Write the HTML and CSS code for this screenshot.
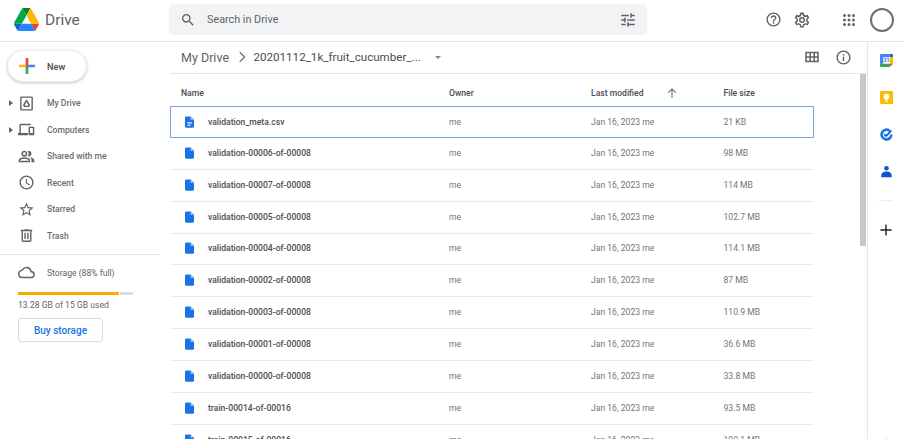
FILE: index.html
```html
<!DOCTYPE html>
<html lang="en">
<head>
    <meta charset="UTF-8">
    <title>My Drive - Google Drive</title>
    <link rel="stylesheet" href="styles.css">
</head>
<body>

<header class="topbar">
    <div class="brand">
        <svg class="logo" viewBox="0 0 87.3 78" width="25" height="23" preserveAspectRatio="none">
            <path d="M6.6 66.85l3.85 6.65c.8 1.4 1.95 2.5 3.3 3.3L27.5 53H0c0 1.55.4 3.1 1.2 4.5z" fill="#0066da"/>
            <path d="M43.65 25L29.9 1.2c-1.35.8-2.5 1.9-3.3 3.3L1.2 48.5A9 9 0 0 0 0 53h27.5z" fill="#00ac47"/>
            <path d="M73.55 76.8c1.35-.8 2.5-1.9 3.3-3.3l1.6-2.75L86.1 57.5c.8-1.4 1.2-2.95 1.2-4.5H59.8l5.85 11.5z" fill="#ea4335"/>
            <path d="M43.65 25L57.4 1.2C56.05.4 54.5 0 52.9 0H34.4c-1.6 0-3.15.45-4.5 1.2z" fill="#00832d"/>
            <path d="M59.8 53H27.5L13.75 76.8c1.35.8 2.9 1.2 4.5 1.2h50.8c1.6 0 3.15-.45 4.5-1.2z" fill="#2684fc"/>
            <path d="M73.4 26.5L60.7 4.5c-.8-1.4-1.95-2.5-3.3-3.3L43.65 25 59.8 53h27.45c0-1.55-.4-3.1-1.2-4.5z" fill="#ffba00"/>
        </svg>
        <span class="brand-name">Drive</span>
    </div>
    <div class="search">
        <svg class="icon" viewBox="0 0 24 24" width="16" height="16"><path d="M15.5 14h-.79l-.28-.27A6.47 6.47 0 0 0 16 9.5 6.5 6.5 0 1 0 9.5 16c1.61 0 3.09-.59 4.23-1.57l.27.28v.79l5 4.99L20.49 19zm-6 0C7.01 14 5 11.99 5 9.5S7.01 5 9.5 5 14 7.01 14 9.5 11.99 14 9.5 14z"/></svg>
        <span class="search-text">Search in Drive</span>
        <svg class="icon tune" viewBox="0 0 24 24" width="18" height="18"><path d="M3 17v2h6v-2zM3 5v2h10V5zm10 16v-2h8v-2h-8v-2h-2v6zM7 9v2H3v2h4v2h2V9zm14 4v-2H11v2zm-6-4h2V7h4V5h-4V3h-2z"/></svg>
    </div>
    <div class="top-actions">
        <svg class="icon" viewBox="0 0 24 24" width="17" height="17"><path d="M11 18h2v-2h-2zm1-16a10 10 0 1 0 0 20 10 10 0 0 0 0-20zm0 18a8 8 0 1 1 0-16 8 8 0 0 1 0 16zm0-14a4 4 0 0 0-4 4h2a2 2 0 1 1 4 0c0 2-3 1.75-3 5h2c0-2.25 3-2.5 3-5a4 4 0 0 0-4-4z"/></svg>
        <svg class="icon gear" viewBox="0 0 24 24" width="18" height="18"><path fill-rule="evenodd" d="M19.4 13c.04-.33.1-.66.1-1s-.06-.67-.1-1l2.100-1.650c.2-.15.25-.42.13-.64l-2-3.460c-.12-.22-.4-.3-.6-.22l-2.500 1c-.52-.4-1.080-.73-1.700-.98l-.37-2.650A.5.5 0 0 0 14 2h-4a.5.5 0 0 0-.5.42l-.37 2.650c-.62.25-1.180.59-1.700.98l-2.500-1a.5.5 0 0 0-.6.22l-2 3.460c-.13.22-.07.49.12.64L4.600 11c-.04.33-.1.66-.1 1s.06.67.1 1l-2.150 1.650a.5.5 0 0 0-.12.64l2 3.460c.12.22.4.3.6.22l2.500-1c.52.4 1.080.73 1.700.98l.37 2.650c.04.24.25.42.5.42h4c.25 0 .46-.18.5-.42l.37-2.650c.62-.25 1.180-.59 1.700-.98l2.500 1c.22.08.48 0 .6-.22l2-3.460a.5.5 0 0 0-.12-.64zM12 20l-1-.1-.3-2.300-.7-.3a6 6 0 0 1-1.400-.8l-.6-.4-2.200.9-1-1.700 1.900-1.400-.1-.8a7 7 0 0 1 0-1.600l.1-.8-1.900-1.400 1-1.700 2.200.9.6-.5a6 6 0 0 1 1.400-.8l.7-.3.3-2.300h2l.3 2.300.7.3a6 6 0 0 1 1.400.8l.6.4 2.200-.9 1 1.700-1.900 1.400.1.800a7 7 0 0 1 0 1.600l-.1.8 1.900 1.400-1 1.700-2.200-.9-.6.5a6 6 0 0 1-1.400.8l-.7.3-.3 2.300zm0-4a4 4 0 1 1 0-8 4 4 0 0 1 0 8zm0-2a2 2 0 1 0 0-4 2 2 0 0 0 0 4z"/></svg>
        <svg class="icon apps" viewBox="0 0 24 24" width="18" height="18"><path d="M6 8a2 2 0 1 0 0-4 2 2 0 0 0 0 4zm6 12a2 2 0 1 0 0-4 2 2 0 0 0 0 4zm-6 0a2 2 0 1 0 0-4 2 2 0 0 0 0 4zm0-6a2 2 0 1 0 0-4 2 2 0 0 0 0 4zm6 0a2 2 0 1 0 0-4 2 2 0 0 0 0 4zm4-8a2 2 0 1 0 4 0 2 2 0 0 0-4 0zm-4 2a2 2 0 1 0 0-4 2 2 0 0 0 0 4zm6 6a2 2 0 1 0 0-4 2 2 0 0 0 0 4zm0 6a2 2 0 1 0 0-4 2 2 0 0 0 0 4z"/></svg>
        <div class="avatar"></div>
    </div>
</header>

<div class="app">
    <aside class="sidebar">
        <button class="new-btn">
            <svg viewBox="0 0 36 36" width="24" height="24">
                <path fill="#34a853" d="M16 16v14h4V20z"/>
                <path fill="#4285f4" d="M30 16H20l-4 4h14z"/>
                <path fill="#fbbc05" d="M6 16v4h10l4-4z"/>
                <path fill="#ea4335" d="M20 16V6h-4v14z"/>
            </svg>
            New
        </button>

        <nav class="nav">
            <a class="nav-item">
                <span class="caret"></span>
                <svg class="icon" viewBox="0 0 24 24" width="17" height="17"><path fill-rule="evenodd" d="M19 2H5a2 2 0 0 0-2 2v16c0 1.100.9 2 2 2h14a2 2 0 0 0 2-2V4a2 2 0 0 0-2-2zM5 4h14v16H5zm6 3h2l4 7-1.500 3h-7L7 14zm1 2.500L9.500 14l.6 1h3.800l.6-1z"/></svg>
                My Drive
            </a>
            <a class="nav-item">
                <span class="caret"></span>
                <svg class="icon" viewBox="0 0 24 24" width="17" height="17"><path d="M4 6h14V4H4a2 2 0 0 0-2 2v11H0v3h14v-3H4zm18 2h-6a1 1 0 0 0-1 1v10c0 .55.45 1 1 1h6c.55 0 1-.45 1-1V9c0-.55-.45-1-1-1zm-1 9h-4v-7h4z"/></svg>
                Computers
            </a>
            <a class="nav-item">
                <span class="caret-gap"></span>
                <svg class="icon" viewBox="0 0 24 24" width="17" height="17"><path d="M15 8c0-1.420-.5-2.730-1.330-3.760A3.990 3.990 0 0 1 19 8a3.990 3.990 0 0 1-5.330 3.760A5.970 5.970 0 0 0 15 8zm1.660 5.130C18.030 14.060 19 15.320 19 17v3h4v-3c0-2.180-3.570-3.470-6.340-3.870zM9 6a2 2 0 1 0 0 4 2 2 0 0 0 0-4zm0 6a4 4 0 1 1 0-8 4 4 0 0 1 0 8zm0 1c-2.670 0-8 1.340-8 4v3h16v-3c0-2.660-5.330-4-8-4zm6 5H3v-.99C3.200 16.290 6.300 15 9 15s5.800 1.290 6 2v1z"/></svg>
                Shared with me
            </a>
            <a class="nav-item">
                <span class="caret-gap"></span>
                <svg class="icon" viewBox="0 0 24 24" width="17" height="17"><path d="M12 2a10 10 0 1 0 0 20 10 10 0 0 0 0-20zm0 18a8 8 0 1 1 0-16 8 8 0 0 1 0 16zm.5-13H11v6l5.200 3.200.8-1.300-4.500-2.700z"/></svg>
                Recent
            </a>
            <a class="nav-item">
                <span class="caret-gap"></span>
                <svg class="icon" viewBox="0 0 24 24" width="17" height="17"><path d="M22 9.240l-7.200-.62L12 2 9.200 8.630 2 9.240l5.460 4.730L5.820 21 12 17.270 18.180 21l-1.630-7.030zM12 15.400l-3.760 2.270 1-4.280-3.320-2.880 4.380-.38L12 6.100l1.700 4.040 4.380.38-3.320 2.880 1 4.280z"/></svg>
                Starred
            </a>
            <a class="nav-item">
                <span class="caret-gap"></span>
                <svg class="icon" viewBox="0 0 24 24" width="17" height="17"><path d="M15 4V3H9v1H4v2h1v13a2 2 0 0 0 2 2h10a2 2 0 0 0 2-2V6h1V4zm2 15H7V6h10zM9 8h2v9H9zm4 0h2v9h-2z"/></svg>
                Trash
            </a>
        </nav>

        <div class="storage">
            <div class="storage-head">
                <svg class="icon" viewBox="0 0 24 24" width="17" height="17"><path d="M19.350 10.040A7.490 7.490 0 0 0 12 4a7.500 7.500 0 0 0-6.650 4.040A6 6 0 0 0 6 20h13a5 5 0 0 0 .35-9.960zM19 18H6a4 4 0 0 1-.44-7.970l1.070-.11.5-.95A5.460 5.460 0 0 1 12 6c2.620 0 4.880 1.860 5.390 4.430l.3 1.500 1.530.11A3 3 0 0 1 19 18z"/></svg>
                Storage (88% full)
            </div>
            <div class="storage-bar"><div class="storage-fill"></div></div>
            <div class="storage-used">13.28 GB of 15 GB used</div>
            <button class="buy-btn">Buy storage</button>
        </div>
    </aside>

    <main class="content">
        <div class="crumbs">
            <span class="crumb">My Drive</span>
            <svg class="crumb-sep" viewBox="0 0 24 24" width="18" height="18"><path d="M9 5.500l6.500 6.500L9 18.500" fill="none" stroke="#5f6368" stroke-width="1.600"/></svg>
            <span class="crumb current">20201112_1k_fruit_cucumber_...</span>
            <span class="crumb-caret"></span>
            <div class="view-actions">
                <svg class="icon" viewBox="0 0 24 24" width="18" height="18"><path d="M3 5v14h18V5zm5.500 12H5v-4h3.500zm0-6H5V7h3.500zm5.500 6h-3.500v-4H14zm0-6h-3.500V7H14zm5 6h-3v-4h3zm0-6h-3V7h3z"/></svg>
                <svg class="icon" viewBox="0 0 24 24" width="17" height="17"><path d="M11 7h2v2h-2zm0 4h2v6h-2zm1-9a10 10 0 1 0 0 20 10 10 0 0 0 0-20zm0 18a8 8 0 1 1 0-16 8 8 0 0 1 0 16z"/></svg>
            </div>
        </div>

        <div class="list-wrap">
            <div class="list">
                <div class="row head">
                    <span class="col-name">Name</span>
                    <span class="col-owner">Owner</span>
                    <span class="col-mod">Last modified<svg class="sort" viewBox="0 0 24 24" width="14" height="14"><path d="M12 20V5M5.500 11.500L12 5l6.500 6.500" fill="none" stroke="#5f6368" stroke-width="1.800"/></svg></span>
                    <span class="col-size">File size</span>
                </div>
                <div class="row selected">
                    <span class="col-name"><svg class="file" viewBox="0 0 16 20"><path d="M2 0h8l6 6v12a2 2 0 0 1-2 2H2a2 2 0 0 1-2-2V2a2 2 0 0 1 2-2z" fill="#1a73e8"/><path d="M10 0l6 6h-6z" fill="#a8c7fa"/><path d="M4 10h8v1.300H4zm0 2.800h8v1.300H4zm0 2.800h5.500v1.300H4z" fill="#fff"/></svg>validation_meta.csv</span>
                    <span class="col-owner">me</span>
                    <span class="col-mod">Jan 16, 2023 me</span>
                    <span class="col-size">21 KB</span>
                </div>
                <div class="row">
                    <span class="col-name"><svg class="file" viewBox="0 0 16 20"><path d="M2 0h8l6 6v12a2 2 0 0 1-2 2H2a2 2 0 0 1-2-2V2a2 2 0 0 1 2-2z" fill="#1a73e8"/><path d="M10 0l6 6h-6z" fill="#a8c7fa"/></svg>validation-00006-of-00008</span>
                    <span class="col-owner">me</span>
                    <span class="col-mod">Jan 16, 2023 me</span>
                    <span class="col-size">98 MB</span>
                </div>
                <div class="row">
                    <span class="col-name"><svg class="file" viewBox="0 0 16 20"><path d="M2 0h8l6 6v12a2 2 0 0 1-2 2H2a2 2 0 0 1-2-2V2a2 2 0 0 1 2-2z" fill="#1a73e8"/><path d="M10 0l6 6h-6z" fill="#a8c7fa"/></svg>validation-00007-of-00008</span>
                    <span class="col-owner">me</span>
                    <span class="col-mod">Jan 16, 2023 me</span>
                    <span class="col-size">114 MB</span>
                </div>
                <div class="row">
                    <span class="col-name"><svg class="file" viewBox="0 0 16 20"><path d="M2 0h8l6 6v12a2 2 0 0 1-2 2H2a2 2 0 0 1-2-2V2a2 2 0 0 1 2-2z" fill="#1a73e8"/><path d="M10 0l6 6h-6z" fill="#a8c7fa"/></svg>validation-00005-of-00008</span>
                    <span class="col-owner">me</span>
                    <span class="col-mod">Jan 16, 2023 me</span>
                    <span class="col-size">102.7 MB</span>
                </div>
                <div class="row">
                    <span class="col-name"><svg class="file" viewBox="0 0 16 20"><path d="M2 0h8l6 6v12a2 2 0 0 1-2 2H2a2 2 0 0 1-2-2V2a2 2 0 0 1 2-2z" fill="#1a73e8"/><path d="M10 0l6 6h-6z" fill="#a8c7fa"/></svg>validation-00004-of-00008</span>
                    <span class="col-owner">me</span>
                    <span class="col-mod">Jan 16, 2023 me</span>
                    <span class="col-size">114.1 MB</span>
                </div>
                <div class="row">
                    <span class="col-name"><svg class="file" viewBox="0 0 16 20"><path d="M2 0h8l6 6v12a2 2 0 0 1-2 2H2a2 2 0 0 1-2-2V2a2 2 0 0 1 2-2z" fill="#1a73e8"/><path d="M10 0l6 6h-6z" fill="#a8c7fa"/></svg>validation-00002-of-00008</span>
                    <span class="col-owner">me</span>
                    <span class="col-mod">Jan 16, 2023 me</span>
                    <span class="col-size">87 MB</span>
                </div>
                <div class="row">
                    <span class="col-name"><svg class="file" viewBox="0 0 16 20"><path d="M2 0h8l6 6v12a2 2 0 0 1-2 2H2a2 2 0 0 1-2-2V2a2 2 0 0 1 2-2z" fill="#1a73e8"/><path d="M10 0l6 6h-6z" fill="#a8c7fa"/></svg>validation-00003-of-00008</span>
                    <span class="col-owner">me</span>
                    <span class="col-mod">Jan 16, 2023 me</span>
                    <span class="col-size">110.9 MB</span>
                </div>
                <div class="row">
                    <span class="col-name"><svg class="file" viewBox="0 0 16 20"><path d="M2 0h8l6 6v12a2 2 0 0 1-2 2H2a2 2 0 0 1-2-2V2a2 2 0 0 1 2-2z" fill="#1a73e8"/><path d="M10 0l6 6h-6z" fill="#a8c7fa"/></svg>validation-00001-of-00008</span>
                    <span class="col-owner">me</span>
                    <span class="col-mod">Jan 16, 2023 me</span>
                    <span class="col-size">36.6 MB</span>
                </div>
                <div class="row">
                    <span class="col-name"><svg class="file" viewBox="0 0 16 20"><path d="M2 0h8l6 6v12a2 2 0 0 1-2 2H2a2 2 0 0 1-2-2V2a2 2 0 0 1 2-2z" fill="#1a73e8"/><path d="M10 0l6 6h-6z" fill="#a8c7fa"/></svg>validation-00000-of-00008</span>
                    <span class="col-owner">me</span>
                    <span class="col-mod">Jan 16, 2023 me</span>
                    <span class="col-size">33.8 MB</span>
                </div>
                <div class="row">
                    <span class="col-name"><svg class="file" viewBox="0 0 16 20"><path d="M2 0h8l6 6v12a2 2 0 0 1-2 2H2a2 2 0 0 1-2-2V2a2 2 0 0 1 2-2z" fill="#1a73e8"/><path d="M10 0l6 6h-6z" fill="#a8c7fa"/></svg>train-00014-of-00016</span>
                    <span class="col-owner">me</span>
                    <span class="col-mod">Jan 16, 2023 me</span>
                    <span class="col-size">93.5 MB</span>
                </div>
                <div class="row">
                    <span class="col-name"><svg class="file" viewBox="0 0 16 20"><path d="M2 0h8l6 6v12a2 2 0 0 1-2 2H2a2 2 0 0 1-2-2V2a2 2 0 0 1 2-2z" fill="#1a73e8"/><path d="M10 0l6 6h-6z" fill="#a8c7fa"/></svg>train-00015-of-00016</span>
                    <span class="col-owner">me</span>
                    <span class="col-mod">Jan 16, 2023 me</span>
                    <span class="col-size">100.1 MB</span>
                </div>
            </div>
            <div class="scrollbar"><div class="thumb"></div></div>
        </div>
    </main>

    <aside class="addons">
        <svg viewBox="0 0 20 20" width="13" height="13">
            <rect width="20" height="20" rx="2" fill="#fff"/>
            <path d="M0 2a2 2 0 0 1 2-2h13v5H5v10H0z" fill="#4285f4"/>
            <path d="M15 0h3a2 2 0 0 1 2 2v3h-5z" fill="#1967d2"/>
            <path d="M15 5h5v10h-5z" fill="#fbbc04"/>
            <path d="M0 15h15v5H2a2 2 0 0 1-2-2z" fill="#34a853"/>
            <path d="M15 15h5l-5 5z" fill="#ea4335"/>
            <text x="10" y="13" class="cal-num">31</text>
        </svg>
        <svg viewBox="0 0 20 20" width="13" height="13">
            <rect width="20" height="20" rx="2" fill="#fbbc04"/>
            <path d="M10 4a4.500 4.500 0 0 0-2.500 8.200V14h5v-1.800A4.500 4.500 0 0 0 10 4zM8 15h4v1.500H8z" fill="#fff"/>
        </svg>
        <svg viewBox="0 0 20 20" width="13" height="13">
            <path d="M15 4.500A7.500 7.500 0 1 0 17.500 10" fill="none" stroke="#1a73e8" stroke-width="4"/>
            <path d="M6.500 9.500l3 3 8-8.500" fill="none" stroke="#0b57d0" stroke-width="2.500"/>
        </svg>
        <svg viewBox="0 0 20 20" width="13" height="13">
            <circle cx="10" cy="5" r="3.500" fill="#0b57d0"/>
            <path d="M2 19v-3c0-4 4-6 8-6s8 2 8 6v3z" fill="#0b57d0"/>
        </svg>
        <div class="addon-line"></div>
        <svg class="addon-plus" viewBox="0 0 20 20" width="14" height="14"><path d="M10 2v16M2 10h16" stroke="#202124" stroke-width="2"/></svg>
        <svg class="addon-chevron" viewBox="0 0 20 20" width="12" height="12"><path d="M5 12l5-5 5 5" fill="none" stroke="#5f6368" stroke-width="2"/></svg>
    </aside>
</div>

</body>
</html>
```

FILE: styles.css
```css
html, body {
    height: 100%;
    margin: 0;
    overflow: hidden;
}
body {
    font-family: Roboto, "Liberation Sans", sans-serif;
    font-size: 8.6px;
    color: #3c4043;
    background: #fff;
}
.icon {
    fill: #5f6368;
    flex: none;
}

/* top bar */
.topbar {
    height: 42px;
    display: flex;
    align-items: center;
    padding-bottom: 2px;
    border-bottom: 1px solid #e4e5e7;
    box-sizing: border-box;
}
.brand {
    width: 169px;
    display: flex;
    align-items: center;
    padding-left: 14px;
    box-sizing: border-box;
    flex: none;
}
.logo {
    margin-right: 6px;
}
.brand-name {
    font-size: 15.5px;
    color: #5f6368;
}
.search {
    width: 478px;
    height: 31px;
    background: #f1f3f4;
    border-radius: 5px;
    display: flex;
    align-items: center;
    padding: 0 10px 0 11px;
    box-sizing: border-box;
    flex: none;
}
.search-text {
    font-size: 10.800px;
    color: #5f6368;
    margin-left: 11px;
    flex: 1;
}
.top-actions {
    display: flex;
    align-items: center;
    margin-left: 118px;
}
.gear {
    margin-left: 11px;
}
.apps {
    margin-left: 29px;
}
.avatar {
    width: 20px;
    height: 20px;
    border: 2px solid #6f6f6f;
    border-radius: 50%;
    margin-left: 12px;
}

/* layout */
.app {
    display: flex;
    height: 397px;
}
.sidebar {
    width: 170px;
    flex: none;
    box-sizing: border-box;
}
.content {
    flex: 1;
    min-width: 0;
    display: flex;
    flex-direction: column;
}
.addons {
    width: 37px;
    flex: none;
    border-left: 1px solid #e4e5e7;
    display: flex;
    flex-direction: column;
    align-items: center;
    gap: 24px;
    padding-top: 12px;
    box-sizing: border-box;
    overflow: hidden;
}
.cal-num {
    font-size: 8px;
    font-weight: 700;
    text-anchor: middle;
    fill: #1a73e8;
}
.addon-line {
    width: 14px;
    height: 1px;
    background: #eceef0;
    margin-top: -2px;
}
.addon-plus {
    margin-top: -2px;
}
.addon-chevron {
    margin-top: auto;
    margin-bottom: -8px;
    flex: none;
}

/* sidebar */
.new-btn {
    display: flex;
    align-items: center;
    width: 80px;
    height: 32px;
    margin: 8px 0 0 7px;
    padding: 0 0 0 7px;
    background: #fff;
    border: 1px solid #eceef0;
    border-radius: 16px;
    box-shadow: 0 1px 3px rgba(60, 64, 67, .3);
    font-family: inherit;
    font-size: 9.200px;
    font-weight: 500;
    color: #4a4d51;
    gap: 8px;
}
.nav {
    margin-top: 8px;
}
.nav-item {
    height: 26.500px;
    display: flex;
    align-items: center;
    padding-left: 9px;
    color: #696d72;
    font-weight: 500;
}
.nav-item .icon {
    margin: 0 12.500px 0 4.500px;
}
.caret {
    width: 0;
    height: 0;
    border-left: 4px solid #5f6368;
    border-top: 3px solid transparent;
    border-bottom: 3px solid transparent;
}
.caret-gap {
    width: 4px;
}
.storage {
    border-top: 1px solid #e4e5e7;
    width: 159px;
    margin-top: 5px;
    padding: 9px 0 0 18px;
    box-sizing: border-box;
}
.storage-head {
    display: flex;
    align-items: center;
    gap: 12px;
    color: #5f6368;
}
.storage-bar {
    width: 115px;
    height: 3px;
    margin-top: 11px;
    background: #dadce0;
}
.storage-fill {
    width: 88%;
    height: 100%;
    background: #f9ab00;
    border-right: 1px solid #fff;
}
.storage-used {
    margin-top: 5px;
    color: #5f6368;
}
.buy-btn {
    display: block;
    width: 85px;
    height: 24px;
    margin-top: 8px;
    background: #fff;
    border: 1px solid #dadce0;
    border-radius: 3px;
    font-family: inherit;
    font-size: 10px;
    font-weight: 500;
    color: #1a73e8;
}

/* breadcrumbs */
.crumbs {
    height: 32px;
    display: flex;
    align-items: center;
    padding-bottom: 1px;
    border-bottom: 1px solid #e4e5e7;
    box-sizing: border-box;
    flex: none;
}
.crumb {
    font-size: 12.500px;
    color: #5f6368;
    padding-left: 11px;
}
.crumb.current {
    font-size: 11.600px;
    color: #4a4d51;
    padding-left: 3px;
}
.crumb-sep {
    margin-left: 3.500px;
}
.crumb-caret {
    width: 0;
    height: 0;
    margin-left: 14px;
    border-top: 3px solid #80868b;
    border-left: 3.500px solid transparent;
    border-right: 3.500px solid transparent;
}
.view-actions {
    margin-left: auto;
    margin-right: 15px;
    display: flex;
    align-items: center;
    gap: 14px;
}

/* file list */
.list-wrap {
    flex: 1;
    min-height: 0;
    display: flex;
    overflow: hidden;
}
.list {
    width: 644px;
    flex: none;
}
.row {
    display: flex;
    align-items: center;
    height: 31.850px;
    padding-bottom: 1px;
    box-sizing: border-box;
    border-bottom: 1px solid #e8eaed;
    color: #70757a;
}
.row.head {
    height: 32px;
    padding-bottom: 0;
    padding-top: 6px;
    border-bottom: none;
    font-weight: 500;
    color: #4a4d51;
}
.row.selected {
    height: 32px;
    padding-bottom: 0;
    border: 1px solid #7ea3dc;
}
.col-name {
    width: 279px;
    padding-left: 11px;
    box-sizing: border-box;
    display: flex;
    align-items: center;
    color: #4a4d51;
    font-weight: 500;
}
.row.selected .col-name {
    width: 278px;
    padding-left: 10px;
}
.col-owner {
    width: 142px;
}
.col-mod {
    width: 132.500px;
    display: flex;
    align-items: center;
    white-space: pre;
}
.sort {
    margin-left: 21px;
}
.file {
    width: 9px;
    height: 12px;
    margin: 0 14px 0 4px;
    flex: none;
}
.scrollbar {
    width: 6px;
    margin-left: 46px;
    flex: none;
}
.thumb {
    height: 172px;
    background: #c8c8c8;
}
```
